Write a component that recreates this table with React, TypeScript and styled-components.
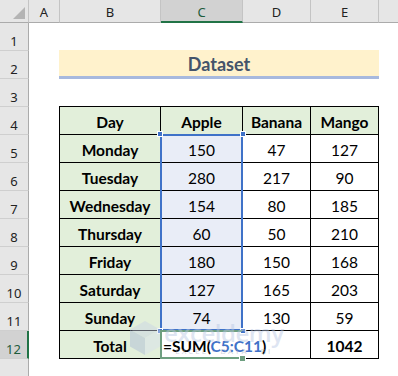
import React from 'react';
import styled, { createGlobalStyle } from 'styled-components';

const columns = ['A', 'B', 'C', 'D', 'E', ''];
const rows = Array.from({ length: 12 }, (_, i) => i + 1);

const fruits = ['Apple', 'Banana', 'Mango'];

const sales: [string, number, number, number][] = [
  ['Monday', 150, 47, 127],
  ['Tuesday', 280, 217, 90],
  ['Wednesday', 154, 80, 185],
  ['Thursday', 60, 50, 210],
  ['Friday', 180, 150, 168],
  ['Saturday', 127, 165, 203],
  ['Sunday', 74, 130, 59],
];

const GREEN_HEAD = '#e2efda';
const SELECTED = '#e9edf7';

function App() {
  return (
    <>
      <GlobalStyle />
      <Sheet>
        <Corner>
          <SelectAll />
        </Corner>
        {columns.map((col, i) => (
          <ColHead key={i} $active={col === 'C'} $last={i === columns.length - 1}>
            {col}
          </ColHead>
        ))}

        {rows.map((r) => (
          <RowHead key={r} $row={r} $active={r === 12}>
            {r}
          </RowHead>
        ))}
        <RowFiller />

        <Banner>Dataset</Banner>

        <Table>
          <Cell $bg={GREEN_HEAD} $bold>
            Day
          </Cell>
          {fruits.map((f) => (
            <Cell key={f} $bg={GREEN_HEAD} $bold>
              {f}
            </Cell>
          ))}

          {sales.map(([day, apple, banana, mango]) => (
            <React.Fragment key={day}>
              <Cell $bg={GREEN_HEAD} $bold>
                {day}
              </Cell>
              <Cell $bg={SELECTED}>{apple}</Cell>
              <Cell>{banana}</Cell>
              <Cell>{mango}</Cell>
            </React.Fragment>
          ))}

          <Cell $bg={GREEN_HEAD} $bold>
            Total
          </Cell>
          <Cell $noRight />
          <Cell />
          <Cell $bold>1042</Cell>
        </Table>

        <Selection>
          <Handle $top $left />
          <Handle $top />
          <Handle $left />
          <Handle />
        </Selection>

        <ActiveCell>
          <Formula>
            =SUM(<Ref>C5:C11</Ref>)
          </Formula>
          <FillHandle />
        </ActiveCell>

        <Watermark>
          <svg width="34" height="36" viewBox="0 0 34 36">
            <polygon points="17,1 32,9.5 17,18 2,9.5" fill="#c9d3e6" />
            <polygon points="2,9.5 17,18 17,35 2,26.5" fill="#a9b9d6" />
            <polygon points="32,9.5 17,18 17,35 32,26.5" fill="#d9e0ee" />
          </svg>
          <MarkText>
            <MarkName>exceldemy</MarkName>
            <MarkTag>EXCEL · DATA · BI</MarkTag>
          </MarkText>
        </Watermark>
      </Sheet>
    </>
  );
}

const GlobalStyle = createGlobalStyle`
  html, body {
    margin: 0;
    padding: 0;
    background: #fff;
  }

  body {
    width: 398px;
    height: 376px;
    overflow: hidden;
  }
`;

const Sheet = styled.div`
  position: relative;
  display: grid;
  grid-template-columns: 29px 31px 101px 82px 68px 68px 1fr;
  grid-template-rows: 23px repeat(12, 28px) 1fr;
  width: 398px;
  height: 376px;
  background: #fff;
  overflow: hidden;
`;

const Corner = styled.div`
  position: relative;
  grid-row: 1;
  grid-column: 1;
  background: #e6e6e6;
  border-right: 1px solid #c4c4c4;
  border-bottom: 1px solid #ababab;
`;

const SelectAll = styled.div`
  position: absolute;
  right: 3px;
  bottom: 3px;
  width: 0;
  height: 0;
  border-left: 12px solid transparent;
  border-bottom: 12px solid #b4b4b4;
`;

const ColHead = styled.div<{ $active?: boolean; $last?: boolean }>`
  grid-row: 1;
  display: flex;
  align-items: center;
  justify-content: center;
  padding-top: 2px;
  background: ${({ $active }) => ($active ? '#d2d2d2' : '#e6e6e6')};
  border-right: ${({ $last }) => ($last ? 'none' : '1px solid #c4c4c4')};
  border-bottom: ${({ $active }) =>
    $active ? '2px solid #217346' : '1px solid #ababab'};
  font-family: 'Noto Sans', 'Open Sans', sans-serif;
  font-size: 13px;
  color: ${({ $active }) => ($active ? '#1e5c3c' : '#222')};
`;

const RowHead = styled.div<{ $row: number; $active?: boolean }>`
  grid-column: 1;
  grid-row: ${({ $row }) => $row + 1};
  display: flex;
  align-items: center;
  justify-content: center;
  padding-top: 8px;
  background: ${({ $active }) => ($active ? '#d2d2d2' : '#e6e6e6')};
  border-right: ${({ $active }) =>
    $active ? '2px solid #217346' : '1px solid #ababab'};
  border-bottom: 1px solid #cfcfcf;
  font-family: 'Noto Sans', 'Open Sans', sans-serif;
  font-size: 13px;
  color: ${({ $active }) => ($active ? '#1e5c3c' : '#222')};
`;

const RowFiller = styled.div`
  grid-column: 1;
  grid-row: 14;
  background: #e6e6e6;
  border-right: 1px solid #ababab;
`;

const Banner = styled.div`
  grid-column: 3 / 7;
  grid-row: 3;
  margin: -1px 0 0 -1px;
  display: flex;
  align-items: center;
  justify-content: center;
  padding-top: 1px;
  background: #fff2cc;
  border-bottom: 3px solid #a7b9de;
  font-family: Lato, 'Liberation Sans', sans-serif;
  font-weight: 700;
  font-size: 18px;
  color: #44546a;
`;

const Table = styled.div`
  grid-column: 3 / 7;
  grid-row: 5 / 14;
  margin: -1px 0 0 -1px;
  display: grid;
  grid-template-columns: 101px 82px 68px 68px;
  grid-template-rows: repeat(9, 28px);
  border-top: 1px solid #000;
  border-left: 1px solid #000;
`;

const Cell = styled.div<{ $bg?: string; $bold?: boolean; $noRight?: boolean }>`
  display: flex;
  align-items: center;
  justify-content: center;
  padding-top: 2px;
  background: ${({ $bg }) => $bg || '#fff'};
  border-right: ${({ $noRight }) => ($noRight ? '1px solid #fff' : '1px solid #000')};
  border-bottom: 1px solid #000;
  font-family: Lato, 'Liberation Sans', sans-serif;
  font-size: 15.5px;
  font-weight: ${({ $bold }) => ($bold ? 700 : 400)};
  color: #000;
`;

const Selection = styled.div`
  position: relative;
  grid-column: 4;
  grid-row: 6 / 13;
  margin: -1px 0 0 -1px;
  border: 2px solid #3f72c8;
  pointer-events: none;
`;

const Handle = styled.span<{ $top?: boolean; $left?: boolean }>`
  position: absolute;
  width: 4px;
  height: 4px;
  background: #3f72c8;
  border: 1px solid #fff;
  ${({ $left }) => ($left ? 'left: -5px;' : 'right: -5px;')}
  ${({ $top }) => ($top ? 'top: -5px;' : 'bottom: -5px;')}
`;

const ActiveCell = styled.div`
  position: relative;
  grid-column: 4;
  grid-row: 13;
  margin: -1px 0 0 -1px;
  display: flex;
  align-items: center;
  border: 2px solid #6e9f80;
  border-right-color: transparent;
  overflow: visible;
`;

const Formula = styled.span`
  padding: 2px 0 0 1px;
  white-space: nowrap;
  font-family: Lato, 'Liberation Sans', sans-serif;
  font-size: 15.5px;
  font-weight: 700;
  color: #000;
`;

const Ref = styled.span`
  color: #3f72c8;
`;

const FillHandle = styled.span`
  position: absolute;
  right: -5px;
  bottom: -5px;
  width: 5px;
  height: 5px;
  background: #6e9f80;
  border: 1px solid #fff;
`;

const Watermark = styled.div`
  position: absolute;
  left: 128px;
  top: 320px;
  display: flex;
  align-items: center;
  gap: 2px;
  opacity: 0.45;
  pointer-events: none;
`;

const MarkText = styled.div`
  display: flex;
  flex-direction: column;
  align-items: center;
  line-height: 1;
`;

const MarkName = styled.span`
  font-family: 'Open Sans', sans-serif;
  font-size: 24px;
  font-weight: 600;
  color: #b7c6e4;
  letter-spacing: -0.5px;
`;

const MarkTag = styled.span`
  margin-top: 2px;
  font-family: 'Open Sans', sans-serif;
  font-size: 8px;
  letter-spacing: 2px;
  color: #9aa6b8;
`;

export default App;
